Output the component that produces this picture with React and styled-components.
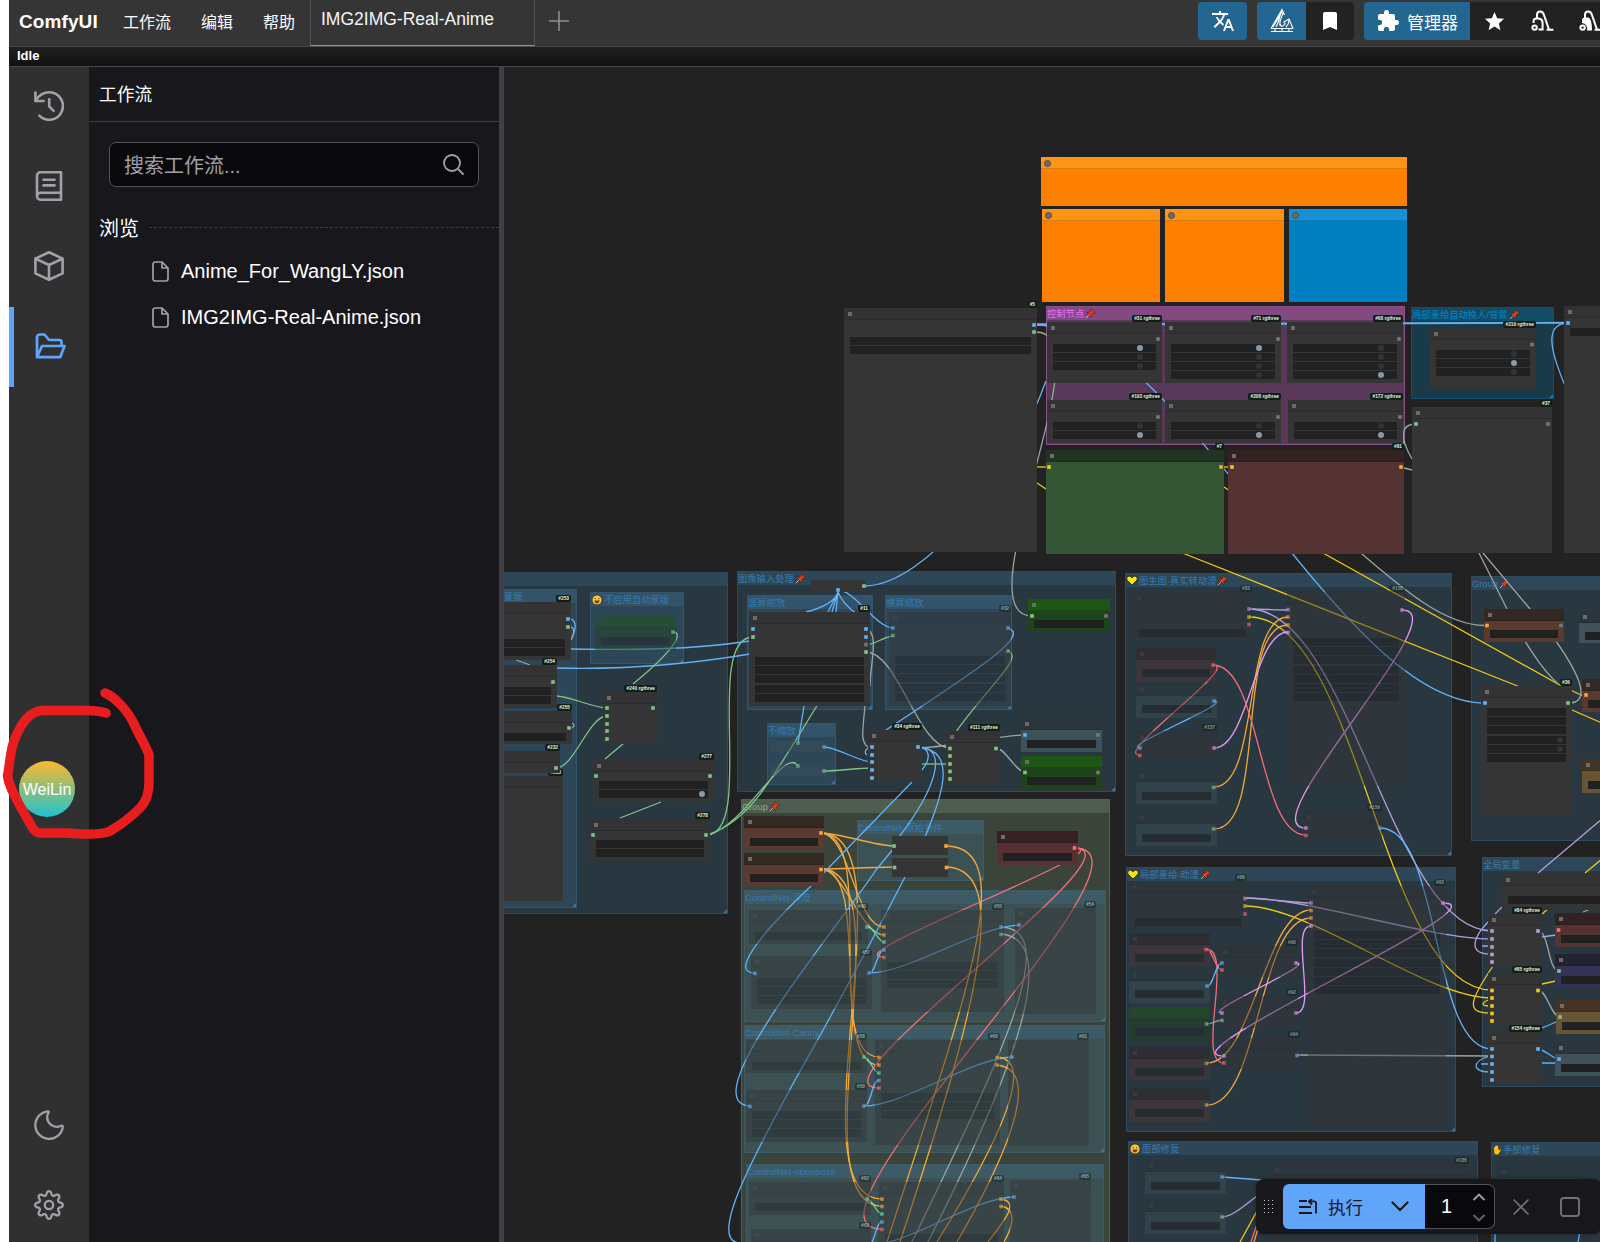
import React from "react";
import styled, { createGlobalStyle, css } from "styled-components";
import { MdTranslate, MdBookmark, MdExtension, MdStar } from "react-icons/md";

const Global = createGlobalStyle`
  * { box-sizing: border-box; }
  body { margin: 0; background: #fff; overflow: hidden; }
`;

/* ---------- shell ---------- */
const Shell = styled.div`
  position: relative;
  display: flex;
  flex-direction: column;
  height: 1242px;
  width: 1600px;
  padding-left: 9px;
  overflow: hidden;
  color: #fff;
  font-family: "Liberation Sans", "Noto Sans CJK SC", sans-serif;
`;
const MenuBar = styled.header`
  flex: none;
  display: flex;
  align-items: stretch;
  height: 47px;
  background: #353535;
  border-bottom: 1px solid #484848;
  overflow: hidden;
`;
const Brand = styled.div`
  flex: none;
  width: 114px;
  padding-left: 10px;
  font-size: 19px;
  font-weight: 700;
  letter-spacing: 0.1px;
  line-height: 43px;
`;
const MenuItem = styled.div`
  flex: none;
  width: ${(p) => p.$w}px;
  font-size: 16px;
  line-height: 45px;
  white-space: nowrap;
`;
const Tab = styled.div`
  flex: none;
  width: 225px;
  height: 46px;
  padding-left: 10px;
  font-size: 17.5px;
  line-height: 38px;
  color: #f4f4f5;
  border: solid #515155;
  border-width: 0 1px;
  border-bottom: 1px solid #5f9fee;
  white-space: nowrap;
`;
const AddTab = styled.div`
  flex: none;
  padding: 11px 0 0 14px;
  width: 663px;
`;
const Tools = styled.div`
  display: flex;
  flex: none;
  gap: 10px;
  height: 38px;
  margin-top: 2px;
`;
const ToolGroup = styled.div`
  display: flex;
  flex: none;
  border-radius: 4px;
  overflow: hidden;
`;
const Tool = styled.div`
  display: flex;
  align-items: center;
  justify-content: center;
  gap: 7px;
  width: ${(p) => p.$w || 48}px;
  height: 38px;
  background: ${(p) => (p.$primary ? "#236692" : "#222222")};
  font-size: 17px;
  white-space: nowrap;
`;
const Status = styled.div`
  flex: none;
  height: 20px;
  padding-left: 8px;
  background: linear-gradient(#202020, #0f1011);
  border-bottom: 1px solid #484848;
  font-size: 13px;
  font-weight: 700;
  line-height: 17px;
`;
const Main = styled.div`
  flex: 1;
  display: flex;
  min-height: 0;
`;

/* ---------- sidebar ---------- */
const Rail = styled.nav`
  flex: none;
  display: flex;
  flex-direction: column;
  width: 80px;
  background: #303030;
`;
const RailItem = styled.div`
  display: flex;
  align-items: center;
  justify-content: center;
  height: 80px;
  padding-bottom: 2px;
  color: ${(p) => (p.$active ? "#60a5fa" : "#a1a1aa")};
  ${(p) => p.$active && css`
    padding-left: 2px;
    box-shadow: inset 5px 0 #60a5fa;
  `}
`;
const RailFooter = styled.div`
  margin-top: auto;
  margin-bottom: -4px;
`;
const Avatar = styled.div`
  position: absolute;
  left: 19px;
  top: 761px;
  width: 56px;
  height: 56px;
  border-radius: 50%;
  background: linear-gradient(#fbb92c, #1fc3d0);
  font-size: 16px;
  line-height: 57px;
  text-align: center;
`;
const Scribble = styled.svg`
  position: absolute;
  left: 0;
  top: 680px;
`;

/* ---------- workflow panel ---------- */
const Panel = styled.aside`
  flex: none;
  width: 410px;
  background: #18171c;
`;
const PanelTitle = styled.div`
  height: 55px;
  padding-left: 10px;
  border-bottom: 1px solid #3f3f46;
  font-size: 17.7px;
  line-height: 56px;
`;
const Search = styled.div`
  display: flex;
  align-items: center;
  justify-content: space-between;
  height: 45px;
  margin: 20px 20px 0;
  padding: 0 14px;
  border: 1px solid #52525b;
  border-radius: 7px;
  background: #09090b;
  color: #a1a1aa;
  font-size: 20px;
`;
const Section = styled.div`
  display: flex;
  align-items: center;
  gap: 10px;
  height: 30px;
  margin: 25px 0 21px;
  padding-left: 10px;
  font-size: 20px;
  &::after {
    content: "";
    flex: 1;
    border-top: 1px dashed #3a3a41;
  }
`;
const Files = styled.div`
  display: flex;
  flex-direction: column;
  margin-top: -15px;
`;
const FileRow = styled.div`
  display: flex;
  align-items: center;
  gap: 12px;
  height: 46px;
  padding-left: 63px;
  font-size: 20px;
`;
const Splitter = styled.div`
  flex: none;
  width: 5px;
  background: #3f3f46;
`;

/* ---------- graph canvas ---------- */
const Viewport = styled.main`
  position: relative;
  flex: 1;
  overflow: hidden;
  background: #222;
`;
const Stage = styled.div`
  position: absolute;
  left: -504px;
  top: -67px;
  width: 1600px;
  height: 1242px;
`;
const box = (p) => ({ style: { left: p.$x, top: p.$y, width: p.$w, height: p.$h } });
const GroupBox = styled.div.attrs(box)`
  position: absolute;
  background: rgba(${(p) => p.$c}, 0.25);
  border: 1px solid rgba(${(p) => p.$c}, 0.3);
  &::after {
    content: "";
    position: absolute;
    right: 0;
    bottom: 0;
    border: 2px solid rgba(${(p) => p.$c}, 0.9);
    border-top-color: transparent;
    border-left-color: transparent;
  }
`;
const GroupTitle = styled.div`
  display: flex;
  align-items: center;
  gap: 1px;
  height: 13px;
  background: rgba(${(p) => p.$c}, 0.25);
  color: ${(p) => p.$ink};
  font-size: 9.3px;
  line-height: 12px;
  white-space: nowrap;
`;
const Links = styled.svg`
  position: absolute;
  inset: 0;
  fill: none;
  stroke-width: 1.3;
`;
const NodeBox = styled.div.attrs(box)`
  position: absolute;
  background: ${(p) => p.$bg};
  opacity: ${(p) => (p.$dim ? 0.45 : 1)};
`;
const NodeHead = styled.div`
  height: 12px;
  background: ${(p) => p.$bg};
  border-bottom: 1px solid rgba(0, 0, 0, 0.14);
  &::before {
    content: "";
    display: block;
    width: 4px;
    height: 4px;
    background: ${(p) => (p.$dim ? "#444" : "#6b6b6b")};
    margin-left: 4px;
    position: relative;
    top: 4px;
    ${(p) => p.$round && css`
      width: 5px;
      height: 5px;
      top: 3px;
      margin-left: 3px;
      border-radius: 50%;
      border: 1px solid #4c4c4c;
    `}
  }
`;
const Badge = styled.div`
  position: absolute;
  right: 0;
  top: -7px;
  height: 7px;
  padding: 0 2px;
  border-radius: 2px;
  background: #0f1f14;
  color: #e6efe6;
  font-size: 4.8px;
  font-weight: 700;
  line-height: 7px;
  white-space: nowrap;
`;
const Widgets = styled.div.attrs((p) => ({ style: { top: p.$y } }))`
  position: absolute;
  left: 6px;
  right: 6px;
  display: flex;
  flex-direction: column;
  gap: 1.2px;
`;
const Widget = styled.div`
  position: relative;
  flex: none;
  height: 8px;
  background: #212121;
`;
const Toggle = styled.span`
  position: absolute;
  top: 1px;
  right: ${(p) => p.$r}px;
  width: 6px;
  height: 6px;
  border-radius: 50%;
  background: ${(p) => (p.$on ? "#8899aa" : "#333")};
`;

const BLUE = "63, 120, 158";
const INK = "#377aab";
// [x1, y1, x2, y2, title, mark, pinned, rgb, title colour]
const groups = [
  [440, 572, 728, 914, ""],
  [503, 589, 577, 908, "蒙版"],
  [590, 592, 684, 664, "不启用自动蒙版", "smile"],
  [737, 571, 1116, 792, "图像输入处理", null, true],
  [747, 595, 873, 710, "竖屏缩放"],
  [885, 595, 1012, 710, "横屏缩放"],
  [767, 723, 836, 785, "不缩放"],
  [741, 799, 1110, 1300, "Group", null, true, "136, 170, 136", "#88aa88"],
  [857, 820, 984, 881, "ControlNet-原始条件"],
  [744, 890, 1106, 1022, "ControlNet-深度"],
  [744, 1025, 1105, 1153, "ControlNet-Canny"],
  [746, 1164, 1104, 1300, "ControlNet-openpose"],
  [1125, 573, 1452, 856, "图生图-真实转动漫", "heart", true],
  [1126, 867, 1456, 1132, "局部重绘-动漫", "heart", true],
  [1128, 1141, 1478, 1300, "面部修复", "smile"],
  [1491, 1142, 1700, 1300, "手部修复", "hand"],
  [1471, 576, 1700, 841, "Group", null, true],
  [1482, 857, 1700, 1087, "全局变量"],
  [1046, 306, 1405, 445, "控制节点", null, true, "255, 125, 255", "#f070f0"],
  [1411, 307, 1554, 399, "局部重绘自动换人/背景", null, true, "0, 130, 192", "#0086c6"],
];

const themes = {
  plain: ["#333333", "#353535"],
  orange: ["#ff9315", "#ff8000"],
  azure: ["#1592d6", "#0080c0"],
  green: ["#233323", "#335533"],
  red: ["#332222", "#553333"],
  wine: ["#352024", "#583034"],
  brown: ["#332822", "#593930"],
  lime: ["#1c5713", "#1f431b"],
  slate: ["#2a363b", "#3f5159"],
  gold: ["#443322", "#665533"],
  navy: ["#222233", "#333355"],
  mist: ["#36464f", "#3d4e58"],
};
// [x1, y1, x2, y2, theme, badge, first widget y, widget count, bypassed, toggles, toggle inset]
const nodes = [
  [1041, 157, 1407, 206, "orange"],
  [1042, 209, 1160, 302, "orange"],
  [1165, 209, 1284, 302, "orange"],
  [1289, 209, 1407, 302, "azure"],
  [844, 308, 1037, 552, "plain", "#5", 337, 2],
  [1047, 322, 1162, 383, "plain", "#31 rgthree", 343.5, 3, 0, [1, 0, 0], 13],
  [1165, 322, 1281, 383, "plain", "#71 rgthree", 343.5, 4, 0, [1, 0, 0, 0], 13],
  [1287, 322, 1403, 383, "plain", "#68 rgthree", 343.5, 4, 0, [0, 0, 0, 1], 13],
  [1047, 400, 1162, 443, "plain", "#193 rgthree", 421.5, 2, 0, [0, 1], 13],
  [1165, 400, 1281, 443, "plain", "#208 rgthree", 421.5, 2, 0, [0, 1], 13],
  [1288, 400, 1403, 443, "plain", "#172 rgthree", 421.5, 2, 0, [0, 1], 13],
  [1046, 450, 1224, 554, "green", "#7"],
  [1228, 450, 1404, 554, "red", "#81"],
  [1430, 328, 1536, 389, "plain", "#219 rgthree", 349.5, 3, 0, [0, 1, 0], 13],
  [1412, 407, 1552, 553, "plain", "#37"],
  [1564, 306, 1700, 553, "plain", null, 328, 1],
  [480, 602, 571, 660, "plain", "#253", 639, 2],
  [480, 665, 557, 708, "plain", "#254", 687, 2],
  [480, 711, 572, 744, "plain", "#255", 733, 1],
  [480, 776, 563, 901, "plain", "#233"],
  [480, 751, 560, 773, "plain", "#232"],
  [595, 615, 676, 650, "lime", null, 637, 1, 1],
  [603, 692, 657, 744, "plain", "#240 rgthree"],
  [593, 760, 714, 801, "plain", "#277", 780.5, 2, 0, [null, 1], 3],
  [590, 819, 710, 861, "plain", "#278", 840, 2],
  [811, 580, 866, 592, "plain"],
  [749, 612, 870, 706, "plain", "#11", 657, 5],
  [889, 612, 1011, 706, "plain", "#32", 656, 5, 1],
  [771, 741, 826, 752, "mist", null, 0, 0, 1],
  [771, 765, 826, 776, "mist", null, 0, 0, 1],
  [868, 730, 922, 782, "plain", "#34 rgthree"],
  [946, 731, 1000, 785, "plain", "#111 rgthree"],
  [1028, 599, 1110, 632, "lime", null, 620, 1],
  [1021, 718, 1102, 752, "slate", null, 740, 1],
  [1021, 756, 1102, 790, "lime", null, 777, 1],
  [744, 816, 824, 850, "brown", null, 838, 1],
  [744, 853, 824, 886, "brown", null, 874, 1],
  [892, 836, 948, 855, "plain"],
  [892, 858, 948, 877, "plain"],
  [997, 831, 1078, 865, "wine", null, 853, 1],
  [749, 910, 868, 944, "plain", "#60", 932, 1, 1],
  [751, 956, 872, 1009, "plain", "#57", 978, 3, 1],
  [881, 910, 1004, 1012, "plain", "#55", 962, 3, 1],
  [1015, 908, 1096, 1014, "plain", "#54", 0, 0, 1],
  [746, 1040, 867, 1073, "plain", "#58", 1062, 1, 1],
  [746, 1090, 867, 1142, "plain", "#59", 1111, 3, 1],
  [875, 1040, 1000, 1145, "plain", "#60", 1093, 3, 1],
  [1008, 1040, 1089, 1146, "plain", "#61", 0, 0, 1],
  [749, 1182, 871, 1215, "plain", "#62", 1203, 1, 1],
  [751, 1229, 871, 1280, "plain", "#63", 0, 0, 1],
  [879, 1182, 1004, 1280, "plain", "#64", 1234, 2, 1],
  [1010, 1180, 1091, 1280, "plain", "#65", 0, 0, 1],
  [1133, 592, 1252, 640, "plain", "#83", 629, 1, 1],
  [1287, 592, 1405, 786, "plain", "#158", 638, 7, 1],
  [1136, 648, 1216, 682, "red", null, 669, 1, 1],
  [1136, 684, 1217, 718, "slate", null, 705, 1, 1],
  [1136, 731, 1217, 760, "plain", "#157", 0, 0, 1],
  [1136, 770, 1217, 804, "slate", null, 792, 1, 1],
  [1136, 812, 1217, 846, "slate", null, 834, 1, 1],
  [1303, 811, 1382, 841, "plain", "#159", 0, 0, 1],
  [1129, 881, 1247, 928, "plain", "#86", 918, 1, 1],
  [1308, 886, 1446, 1126, "plain", "#93", 931, 7, 1],
  [1129, 933, 1210, 966, "red", null, 954, 1, 1],
  [1129, 969, 1210, 1003, "slate", null, 990, 1, 1],
  [1129, 1007, 1210, 1041, "lime", null, 1028, 1, 1],
  [1129, 1047, 1210, 1080, "red", null, 1068, 1, 1],
  [1129, 1088, 1210, 1122, "brown", null, 1109, 1, 1],
  [1219, 946, 1298, 977, "plain", "#90", 0, 0, 1],
  [1219, 996, 1298, 1028, "plain", "#92", 0, 0, 1],
  [1221, 1038, 1300, 1069, "plain", "#94", 0, 0, 1],
  [1484, 609, 1564, 642, "brown", null, 630, 1],
  [1579, 611, 1700, 643, "slate", null, 632, 1],
  [1481, 686, 1572, 816, "plain", "#36", 708, 6, 0, [null, null, null, 0, 0, null], 3],
  [1582, 679, 1700, 712, "brown", null, 700, 1],
  [1582, 759, 1700, 793, "gold", null, 781, 1],
  [1502, 874, 1700, 910, "plain", null, 896, 1],
  [1488, 914, 1542, 967, "plain", "#84 rgthree"],
  [1488, 973, 1542, 1025, "plain", "#85 rgthree"],
  [1488, 1032, 1542, 1083, "plain", "#154 rgthree"],
  [1555, 913, 1700, 947, "red", null, 935, 1],
  [1555, 954, 1700, 987, "navy", null, 976, 1],
  [1556, 1000, 1700, 1034, "gold", null, 1022, 1],
  [1555, 1042, 1700, 1076, "slate", null, 1064, 1],
  [1145, 1160, 1226, 1194, "slate", null, 1182, 1, 1],
  [1145, 1200, 1226, 1234, "slate", null, 1222, 1, 1],
  [1271, 1164, 1469, 1300, "plain", "#185", 0, 0, 1],
  [1498, 1166, 1578, 1200, "slate", null, 1187, 1, 1],
];

const C = { b: "#64b1f5", g: "#7fc487", y: "#eccb12", o: "#f5a93a", r: "#f46f75", p: "#b39ddb", k: "#e79af0", n: "#9aa59f", a: "#66e0a3", x: "#777" };
// [from x, from y, to x, to y, colour]
const splines = [
  [1034, 325, 1568, 323, "b"], [1034, 324, 1568, 322.5, "b"],
  [1036, 325, 1485, 703, "b"], [1036, 332, 1032, 616, "n"], [1221, 467, 1232, 467, "y"],
  [556, 696, 607, 708, "g"], [556, 768, 607, 716, "g"], [706, 835, 753, 637, "g"],
  [838, 590, 893, 628, "b"], [866, 652, 950, 748, "n"], [866, 645, 893, 636, "g"],
  [824, 747, 872, 762, "b"], [824, 771, 872, 768, "g"], [996, 748, 1025, 772, "n"],
  [918, 748, 1025, 735, "n"], [918, 764, 950, 764, "g"],
  [821, 833, 894, 846, "o"], [821, 869, 894, 867, "o"],
  [821, 833, 884, 927, "o"], [821, 869, 884, 935, "o"],
  [821, 833, 879, 1057, "o"], [821, 869, 879, 1065, "o"],
  [821, 833, 882, 1199, "o"], [821, 869, 882, 1206, "o"],
  [1074, 848, 884, 957, "r"], [1074, 848, 879, 1088, "r"], [1074, 848, 882, 1229, "r"],
  [869, 973, 884, 950, "b"], [869, 973, 1020, 925, "b"], [864, 1106, 879, 1080, "b"], [864, 1106, 1013, 1057, "b"],
  [867, 1246, 1014, 1197, "b"], [868, 1246, 882, 1222, "b"],
  [868, 927, 884, 942, "a"], [864, 1057, 879, 1073, "a"], [867, 1199, 882, 1214, "a"],
  [1249, 609, 1288, 610, "p"], [1249, 617, 1492, 990, "y"], [1249, 609, 1492, 931, "p"],
  [1380, 828, 1492, 1049, "b"], [1214, 787, 1288, 617, "o"], [1214, 829, 1288, 625, "o"],
  [1214, 748, 1288, 632, "k"], [1213, 665, 1306, 835, "r"], [1213, 665, 1140, 755, "r"],
  [1214, 701, 1140, 748, "b"], [1402, 610, 1306, 828, "k"],
  [1245, 898, 1311, 903, "p"], [1245, 898, 1492, 939, "p"], [1245, 906, 1492, 998, "y"],
  [1207, 1063, 1311, 910, "o"], [1207, 1105, 1311, 918, "o"], [1296, 1013, 1311, 926, "k"],
  [1443, 903, 1224, 1056, "k"], [1296, 963, 1222, 1013, "k"], [1206, 949, 1222, 970, "r"],
  [1206, 949, 1224, 1063, "r"], [1207, 986, 1222, 963, "b"], [1207, 1024, 1222, 1020, "n"],
  [1297, 1055, 1492, 1056, "n"], [1538, 1049, 1559, 1059, "b"], [1538, 990, 1560, 1017, "n"], [1538, 931, 1559, 971, "n"],
];
const curves = [
  ["M866 586 C925 584 1010 480 1046 381", "b"],
  ["M1568 323 C1542 324 1552 355 1566 388", "b"],
  ["M1037 467 H1046", "y"],
  ["M1037 483 L1046 489 C1100 522 1150 541 1185 554 L1515 685 L1572 710 L1602 723", "y"],
  ["M1224 487 L1323 553 L1558 684 L1583 696", "y"],
  ["M1404 468 L1412 470 M1416 424 C1400 424 1400 438 1412 459", "n"],
  ["M1340 535 C1395 582 1440 625 1485 625.5", "n"],
  ["M1479 553 L1507 609 C1525 643 1540 667 1558 684", "n"],
  ["M1483 553 L1530 609 C1560 643 1600 700 1571 703", "n"],
  ["M571 649 C630 650 690 650 750 641 M557 668 C630 670 690 664 750 654", "b"],
  ["M568 619 C577 618 577 628 571 640", "b"],
  ["M568 627 C575 626 575 632 571 640 M572 728 Q576 725 572 723 M516 660 L530 665", "n"],
  ["M673 632 C685 633 672 652 633 684 M624 743 L605 759 M661 802 L620 818", "g"],
  ["M710 834 C750 820 770 782 818 704 M710 834 C745 825 785 745 798 766", "g"],
  ["M804 706 L798 743", "b"],
  ["M838 592 C835 602 822 608 806 612 M838 592 L828 612 M838 592 L832 612 M838 592 L836 612 M838 592 C842 602 848 608 857 614", "b"],
  ["M866 629 C880 632 870 665 870 686 M865 706 C862 735 861 742 868 747", "n"],
  ["M868 748 Q863 752 867 755", "b"],
  ["M1008 628 C1030 635 985 665 886 730", "b"],
  ["M1008 651 C1025 657 985 690 956 732", "g"],
  ["M918 747 C932 748 930 760 922 770 M918 747 C950 747 935 790 899 837 M918 747 C960 750 940 800 925 837", "b"],
  ["M912 782 L810 887 C775 920 725 973 755 973", "b"],
  ["M894 848 L876 870 C840 925 690 1103 750 1106", "b"],
  ["M905 877 C870 945 818 1040 795 1080 C760 1145 705 1242 740 1243", "b"],
  ["M948 846 C1020 850 965 1000 887 1242 M948 867 C1010 872 980 1000 900 1242", "o"],
  ["M1001 927 C1060 930 1010 1040 912 1242 M1001 934 C1065 940 1010 1080 928 1242", "n"],
  ["M997 1057 C1037 1060 1000 1140 937 1242 M997 1065 C1042 1070 1010 1150 957 1242", "o"],
  ["M1001 1199 C1020 1202 1005 1220 988 1242 M1001 1206 C1018 1209 1012 1228 1004 1242", "o"],
  ["M1538 873 L1602 819 M1502 907 L1495 914 M1490 920 C1470 940 1470 954 1490 954 M1482 946 H1490 M1542 937 L1556 935", "p"],
  ["M1585 873 L1602 859 M1493 966 C1470 1000 1465 1013 1490 1013 M1488 1000 Q1478 1005 1488 1006 M1542 984 L1556 981 M1542 914 L1549 908", "y"],
  ["M1490 1056 C1470 1062 1473 1072 1490 1072 M1481 1064 H1490 M1542 1028 L1556 1022 M1542 1063 H1556", "b"],
  ["M1583 912 L1596 907", "n"],
  ["M1222 1177 L1262 1180", "b"],
  ["M1222 1217 C1232 1217 1245 1205 1262 1192", "p"],
  ["M1240 1242 L1262 1202", "y"], ["M1251 1242 L1260 1215", "r"], ["M1254 1242 L1262 1215", "o"],
  ["M1495 1250 V1230 M1577 1250 L1580 1230", "b"],
];
// colour -> [x, y] slot positions
const ports = [
  ["b", 1034, 325], ["g", 1034, 332], ["x", 1158, 339], ["x", 1278, 339], ["x", 1399, 339], ["x", 1158, 417], ["x", 1278, 417], ["x", 1400, 417],
  ["y", 1049, 467], ["o", 1221, 467], ["y", 1232, 467], ["o", 1401, 467], ["x", 1532, 344.5], ["g", 1416, 424], ["x", 1548, 424], ["b", 1568, 323],
  ["b", 568, 619], ["g", 568, 627], ["g", 553, 682], ["g", 569, 728], ["g", 556, 768],
  ...[708, 716, 724, 731, 739].map((y) => ["g", 607, y]), ["g", 653, 708],
  ["g", 596, 776], ["g", 710, 776], ["g", 593, 835], ["g", 706, 835], ["g", 864, 586], ["b", 838, 590],
  ["b", 753, 629], ["g", 753, 637], ["b", 866, 629], ["b", 866, 637], ["x", 866, 644.5], ["g", 866, 652],
  ...[747, 755, 762, 770, 778].map((y) => ["b", 872, y]), ["b", 918, 747],
  ...[748.5, 756, 764, 771.5, 779].map((y) => ["g", 950, y]), ["g", 996, 748.5],
  ["g", 1032, 616], ["x", 1106, 616], ["b", 1025, 735], ["x", 1098, 735], ["g", 1025, 772.5], ["x", 1098, 772.5],
  ["o", 821, 833], ["o", 821, 869.5], ["g", 894, 846], ["o", 946, 846], ["g", 894.5, 867.5], ["o", 946.5, 867.5], ["r", 1074.5, 848],
  ["o", 1487, 625.5], ["x", 1561, 625.5], ["b", 1485, 703], ["g", 1568, 703], ["o", 1586, 695],
  ...[931, 939, 947, 954.5, 962].map((y) => ["p", 1492, y]), ["p", 1538, 931],
  ...[990.5, 998, 1006, 1013.5, 1021].map((y) => ["y", 1492, y]), ["y", 1538, 990.5],
  ...[1049, 1056.5, 1064, 1072, 1080].map((y) => ["b", 1492, y]), ["b", 1538, 1049],
  ["r", 1558.5, 930], ["g", 1559, 971], ["g", 1560, 1017], ["b", 1559, 1059],
];
const dimPorts = [
  ["g", 673, 632], ["b", 893, 628], ["g", 893, 635.5], ["b", 1008, 628], ["g", 1008, 651], ["g", 798, 743], ["b", 824, 747], ["g", 798, 766], ["g", 824, 771],
  ...[927, 935].map((y) => ["o", 884, y]), ["a", 884, 942], ["b", 884, 950], ["r", 884, 957.5], ["b", 869, 973], ["b", 755, 973.5], ["b", 1001, 927], ["n", 1001, 934.5], ["b", 1019, 925], ["a", 867, 927],
  ["o", 879, 1057.5], ["o", 879, 1065], ["a", 879, 1073], ["b", 879, 1080.5], ["r", 879, 1088], ["b", 864, 1106], ["b", 750, 1106.5], ["o", 997, 1057.5], ["o", 997, 1065], ["b", 1012, 1057], ["a", 864, 1057],
  ["o", 882, 1199], ["o", 882, 1206.5], ["a", 882, 1214], ["b", 882, 1222], ["r", 882, 1229.5], ["o", 1001, 1199], ["o", 1001, 1206.5], ["b", 1014, 1197], ["a", 867, 1199],
  ["p", 1249, 609], ["y", 1249, 617], ["r", 1249, 624.5], ["p", 1288, 609.5], ["o", 1288, 617], ["o", 1288, 625], ["k", 1288, 632.5], ["k", 1402, 610],
  ["r", 1213, 665], ["b", 1214, 701], ["b", 1140, 748], ["r", 1140, 755.5], ["k", 1214, 748], ["g", 1213.5, 787.5], ["g", 1213.5, 829], ["k", 1306, 828], ["r", 1306, 835.5], ["b", 1380, 828],
  ["p", 1245, 898.5], ["y", 1245, 906], ["r", 1245, 914], ["p", 1311, 903], ["o", 1311, 910.5], ["o", 1311, 918], ["k", 1311, 926], ["k", 1443, 903],
  ["r", 1206, 949.5], ["b", 1207, 986], ["g", 1206.5, 1024], ["g", 1206.5, 1063.5], ["g", 1206.5, 1105], ["b", 1222, 963], ["r", 1222, 970], ["k", 1296, 963], ["k", 1222, 1013], ["g", 1222, 1020.5], ["k", 1296, 1013], ["k", 1224, 1056], ["r", 1224, 1063], ["b", 1297, 1055.5],
  ["b", 1222, 1177], ["g", 1222, 1217],
];

function splinePath([x1, y1, x2, y2]) {
  const d = Math.hypot(x2 - x1, y2 - y1) / 4;
  return `M${x1} ${y1} C${x1 + d} ${y1} ${x2 - d} ${y2} ${x2} ${y2}`;
}

/* ---------- icons ---------- */
const Pin = () => (
  <svg width="11" height="11" viewBox="0 0 11 11">
    <path d="M4.4 6.6 L1 10" stroke="#bbb" strokeWidth="1" />
    <path d="M6 .6 L10.4 4.6 L9.4 5.2 L8.4 5 L7 6.6 L7 8.8 L6.2 9.2 L1.8 5.2 L2.4 4.3 L4.6 4.2 L6 2.6 L5.6 1.4z" fill="#e63c1a" stroke="#3a0e06" strokeWidth=".5" />
  </svg>
);
const Mark = ({ kind }) => {
  if (kind === "heart")
    return (
      <svg width="12" height="11" viewBox="0 0 12 11">
        <path d="M6 10 L1.6 5.6 C-.2 3.6 1.2 1.2 3.2 1.2 C4.6 1.2 5.6 2 6 3 C6.4 2 7.4 1.2 8.8 1.2 C10.8 1.2 12.2 3.6 10.4 5.6z" fill="#ffe600" stroke="#111" strokeWidth=".7" />
      </svg>
    );
  if (kind === "hand")
    return (
      <svg width="10" height="12" viewBox="0 0 10 12">
        <path d="M2 9 L1.4 3 L2.6 3 L3 1.4 L4.2 1.2 L5.4 1 L6.4 2 L7 6 L8.6 4.8 L9.4 5.8 L7 10 L5 11 L3 10.6z" fill="#fcc21b" stroke="#222" strokeWidth=".6" />
      </svg>
    );
  return (
    <svg width="12" height="12" viewBox="0 0 12 12">
      <circle cx="6" cy="6" r="5" fill="#fcc933" stroke="#1c1c1c" strokeWidth=".7" />
      <circle cx="4.3" cy="4.6" r=".7" fill="#4a3310" />
      <circle cx="7.7" cy="4.6" r=".7" fill="#4a3310" />
      <path d="M3.2 6.600 H8.800 Q8 9.400 6 9.400 T3.200 6.600z" fill="#6a3a10" />
    </svg>
  );
};
const Line = ({ size = 30, vb = 30, w = 2.6, children }) => (
  <svg width={size} height={size} viewBox={`0 0 ${vb} ${vb}`} fill="none" stroke="currentColor" strokeWidth={w} strokeLinecap="round" strokeLinejoin="round">
    {children}
  </svg>
);
const HistoryIcon = () => (
  <Line>
    <path d="M1.4 1.6 V10 H9.6 M1.8 9.6 C5 4 10 1.3 15.4 1.3 A13.7 13.7 0 1 1 5.4 24.6" />
    <path d="M15.2 8.2 V15.4 L19.6 19.8" />
  </Line>
);
const BookIcon = () => (
  <Line>
    <path d="M27 1.3 V28.7 H6.4 A3.4 3.4 0 0 1 3 25.3 V4.7 A3.4 3.4 0 0 1 6.4 1.3 H27 M3.2 25 A3.2 3.2 0 0 1 6.4 21.8 H27 M9.5 8.8 H20.5 M9.5 14.4 H20.5" />
  </Line>
);
const BoxIcon = () => (
  <Line>
    <path d="M15 1.3 L28.6 7.6 V22.4 L15 28.7 L1.4 22.4 V7.6z M1.4 7.6 L15 14 L28.6 7.6 M15 14 V28.8" />
  </Line>
);
const FolderIcon = () => (
  <Line size={32} vb={32} w={2.7}>
    <path d="M3 27 V7 A3 3 0 0 1 6 4.5 H10.5 L15 10 H25.5 A2 2 0 0 1 27.5 12 V15.5 M3 27.2 L8 16 H30.500 L26.2 27.2z" />
  </Line>
);
const MoonIcon = () => (
  <Line w={2.3}>
    <path d="M14 1.4 A13.8 13.8 0 1 0 28.8 17.2 C29 15.8 27.6 15.4 26.6 16 A9.6 9.6 0 0 1 13.6 4.6 C14.4 3 15.6 1.4 14 1.4z" />
  </Line>
);
function gearPath() {
  const pts = [];
  for (let i = 0; i <= 96; i++) {
    const a = (i / 96) * Math.PI * 2;
    const s = Math.cos(8 * a);
    const r = 11.9 + 1.9 * Math.sign(s) * Math.pow(Math.abs(s), 0.55);
    pts.push(`${(15 + r * Math.sin(a)).toFixed(2)} ${(15 - r * Math.cos(a)).toFixed(2)}`);
  }
  return `M${pts.join(" L")}z`;
}
const GearIcon = () => (
  <Line w={2.3}>
    <path d={gearPath()} />
    <circle cx="15" cy="15" r="4.2" />
  </Line>
);
const SailIcon = () => (
  <svg width="24" height="26" viewBox="0 0 24 26" fill="none" stroke="#fff" strokeWidth="1.1">
    <path d="M1 20.5 L12 1.5 L14.5 7 M3 19 L12 4 M6 19 C9 14 9 9 12 3 M10 18 C9 13 12 9 13 5 M10 12 C9 18 12 20 15 16 L14 14 L19 11 L23 20.5 M16 19 C18 17 19 15 19 12 M1 20.5 H23 M1 23.5 H23 M5 21 V23 M12 21 V23 M19 21 V23" />
  </svg>
);
const VacuumIcon = ({ filled }) => (
  <svg width="23" height="22" viewBox="0 0 23 22" fill="none" stroke="#fff" strokeWidth="2">
    <circle cx="3.6" cy="17.6" r="2.2" />
    {filled ? (
      <path d="M3 13 V10 Q3 7.5 6 7.5 H9 Q13 8 13 20.5 H8 Q9 14 3 13z" fill="#fff" stroke="none" />
    ) : (
      <path d="M2.6 13 V11 Q2.6 8.4 5.4 8.4 H8 Q11.6 9 11.6 13 V19.6 H7.5" />
    )}
    <path d="M6 8 V5 Q6 1.6 9.2 1.6 Q12 1.6 13 5 L18 19.6 M15.6 19.8 H22.4" />
  </svg>
);
const FileIcon = () => (
  <svg width="17" height="21" viewBox="0 0 17 21" fill="none" stroke="#a1a1aa" strokeWidth="1.7" strokeLinejoin="round">
    <path d="M3.2 1 H10 L16 7 V17.8 A2.2 2.2 0 0 1 13.8 20 H3.2 A2.2 2.2 0 0 1 1 17.8 V3.2 A2.2 2.2 0 0 1 3.2 1z M10 1 V7 H16" />
  </svg>
);

/* ---------- queue bar ---------- */
const QueueBar = styled.div`
  position: absolute;
  left: 1256px;
  top: 1179px;
  display: flex;
  align-items: center;
  width: 345px;
  height: 55px;
  padding-left: 8px;
  border-radius: 8px;
  background: #18181b;
  box-shadow: 0 0 4px rgba(0, 0, 0, 0.4);
`;
const Grip = styled.div`
  display: grid;
  grid-template-columns: repeat(3, 1px);
  gap: 3px;
  width: 19px;
  i {
    height: 1px;
    background: #c4c4cc;
  }
`;
const RunButton = styled.div`
  display: flex;
  align-items: center;
  gap: 11px;
  width: 142px;
  height: 45px;
  padding-left: 16px;
  border-radius: 6px 0 0 6px;
  background: #60a5fa;
  color: #18181b;
  font-size: 17.6px;
  svg:last-child {
    margin-left: 17px;
  }
`;
const Count = styled.div`
  display: flex;
  align-items: center;
  justify-content: space-between;
  width: 70px;
  height: 45px;
  padding: 0 7px 0 16px;
  border: 1px solid #52525b;
  border-left: 0;
  border-radius: 0 7px 7px 0;
  background: #09090b;
  font-size: 20px;
  svg {
    display: block;
  }
`;
const Spin = styled.div`
  display: flex;
  flex-direction: column;
  gap: 4px;
`;
const BarIcon = styled.div`
  display: flex;
  color: #71717a;
  margin-left: ${(p) => p.$gap}px;
`;

function Group({ g }) {
  const [x1, y1, x2, y2, title, mark, pinned, c = BLUE, ink = INK] = g;
  return (
    <GroupBox $x={x1} $y={y1} $w={x2 - x1} $h={y2 - y1} $c={c}>
      <GroupTitle $c={c} $ink={ink}>
        {mark && <Mark kind={mark} />}
        {title}
        {pinned && <Pin />}
      </GroupTitle>
    </GroupBox>
  );
}

function GraphNode({ n }) {
  const [x1, y1, x2, y2, theme, badge, wy, count = 0, dim, toggles, inset] = n;
  const [head, body] = themes[theme];
  return (
    <NodeBox $x={x1} $y={y1} $w={x2 - x1} $h={y2 - y1} $bg={body} $dim={dim}>
      {y2 - y1 > 20 && <NodeHead $bg={head} $dim={dim} $round={theme === "orange" || theme === "azure"} />}
      {badge && <Badge>{badge}</Badge>}
      {count > 0 && (
        <Widgets $y={wy - y1}>
          {Array.from({ length: count }, (_, i) => (
            <Widget key={i}>{toggles && toggles[i] != null && <Toggle $on={toggles[i]} $r={inset} />}</Widget>
          ))}
        </Widgets>
      )}
    </NodeBox>
  );
}

const Slots = ({ list, opacity }) => (
  <g stroke="none" opacity={opacity}>
    {list.map(([c, x, y], i) => (
      <rect key={i} x={x - 1.8} y={y - 1.8} width="3.6" height="3.6" fill={C[c]} />
    ))}
  </g>
);

export default function App() {
  return (
    <Shell>
      <Global />
      <MenuBar>
        <Brand>ComfyUI</Brand>
        <MenuItem $w={78}>工作流</MenuItem>
        <MenuItem $w={62}>编辑</MenuItem>
        <MenuItem $w={47}>帮助</MenuItem>
        <Tab>IMG2IMG-Real-Anime</Tab>
        <AddTab>
          <svg width="20" height="20" stroke="#8e8e93" strokeWidth="1.6"><path d="M10 0 V20 M0 10 H20" /></svg>
        </AddTab>
        <Tools>
          <ToolGroup><Tool $w={49} $primary><MdTranslate size={24} /></Tool></ToolGroup>
          <ToolGroup>
            <Tool $w={49} $primary><SailIcon /></Tool>
            <Tool><MdBookmark size={24} /></Tool>
          </ToolGroup>
          <ToolGroup>
            <Tool $w={106} $primary><MdExtension size={24} />管理器</Tool>
            <Tool><MdStar size={23} /></Tool>
            <Tool><VacuumIcon /></Tool>
            <Tool><VacuumIcon filled /></Tool>
          </ToolGroup>
        </Tools>
      </MenuBar>
      <Status>Idle</Status>
      <Main>
        <Rail>
          <RailItem><HistoryIcon /></RailItem>
          <RailItem><BookIcon /></RailItem>
          <RailItem><BoxIcon /></RailItem>
          <RailItem $active><FolderIcon /></RailItem>
          <RailFooter>
            <RailItem><MoonIcon /></RailItem>
            <RailItem><GearIcon /></RailItem>
          </RailFooter>
        </Rail>
        <Panel>
          <PanelTitle>工作流</PanelTitle>
          <Search>
            搜索工作流...
            <Line size={21} vb={21} w={1.8}><circle cx="9" cy="9" r="8" /><path d="M15 15 L20 20" /></Line>
          </Search>
          <Section>浏览</Section>
          <Files>
            <FileRow><FileIcon />Anime_For_WangLY.json</FileRow>
            <FileRow><FileIcon />IMG2IMG-Real-Anime.json</FileRow>
          </Files>
        </Panel>
        <Splitter />
        <Viewport>
          <Stage>
            {groups.map((g, i) => <Group key={i} g={g} />)}
            <Links width="1600" height="1242">
              {splines.map((s, i) => <path key={i} d={splinePath(s)} stroke={C[s[4]]} />)}
              {curves.map(([d, c], i) => <path key={i} d={d} stroke={C[c]} />)}
            </Links>
            {nodes.map((n, i) => <GraphNode key={i} n={n} />)}
            <Links width="1600" height="1242">
              <Slots list={ports} opacity={1} />
              <Slots list={dimPorts} opacity={0.6} />
            </Links>
          </Stage>
        </Viewport>
      </Main>
      <Avatar>WeiLin</Avatar>
      <Scribble width="170" height="170" viewBox="0 680 170 170" fill="none" stroke="#e81e1e" strokeWidth="9.5" strokeLinecap="round" strokeLinejoin="round">
        <path d="M105 693 C115 697 128 711 134 724 C140 737 147 748 149 755 V782 C149 790 147 801 140 808 Q126 822 110 831 Q102 836 67 833 H40 Q36 833 32 827 L19 804 Q9 786 7.500 776 C10 762 10 755 13 744 Q24 712 42 710.500 H87 Q98 710.500 106 713" />
      </Scribble>
      <QueueBar>
        <Grip>{Array.from({ length: 12 }, (_, i) => <i key={i} />)}</Grip>
        <RunButton>
          <svg width="18" height="16" viewBox="0 0 18 16" fill="none" stroke="#18181b" strokeWidth="1.8">
            <path d="M0 2 H8 M0 8 H12 M0 14 H13 M10 2.400 H15.500 Q17 2.400 17 4 V14.500 M13 -.5 L10 2.400 L13 5.500" />
          </svg>
          执行
          <svg width="18" height="11" viewBox="0 0 18 11" fill="none" stroke="#18181b" strokeWidth="2.200" strokeLinecap="round"><path d="M1.500 1.500 L9 9 L16.500 1.500" /></svg>
        </RunButton>
        <Count>
          1
          <Spin>
            <svg width="16" height="20" viewBox="0 0 16 20" fill="none" stroke="#a1a1aa" strokeWidth="1.900"><path d="M2.500 13 L8 7.500 L13.500 13" /></svg>
            <svg width="16" height="16" viewBox="0 0 16 16" fill="none" stroke="#63636b" strokeWidth="1.900"><path d="M2.500 4 L8 9.500 L13.500 4" /></svg>
          </Spin>
        </Count>
        <BarIcon $gap={18}><Line size={16} vb={16} w={1.7}><path d="M1 1 L15 15 M15 1 L1 15" /></Line></BarIcon>
        <BarIcon $gap={31}><Line size={20} vb={20} w={1.9}><rect x="1" y="1" width="18" height="18" rx="2.500" /></Line></BarIcon>
      </QueueBar>
    </Shell>
  );
}
